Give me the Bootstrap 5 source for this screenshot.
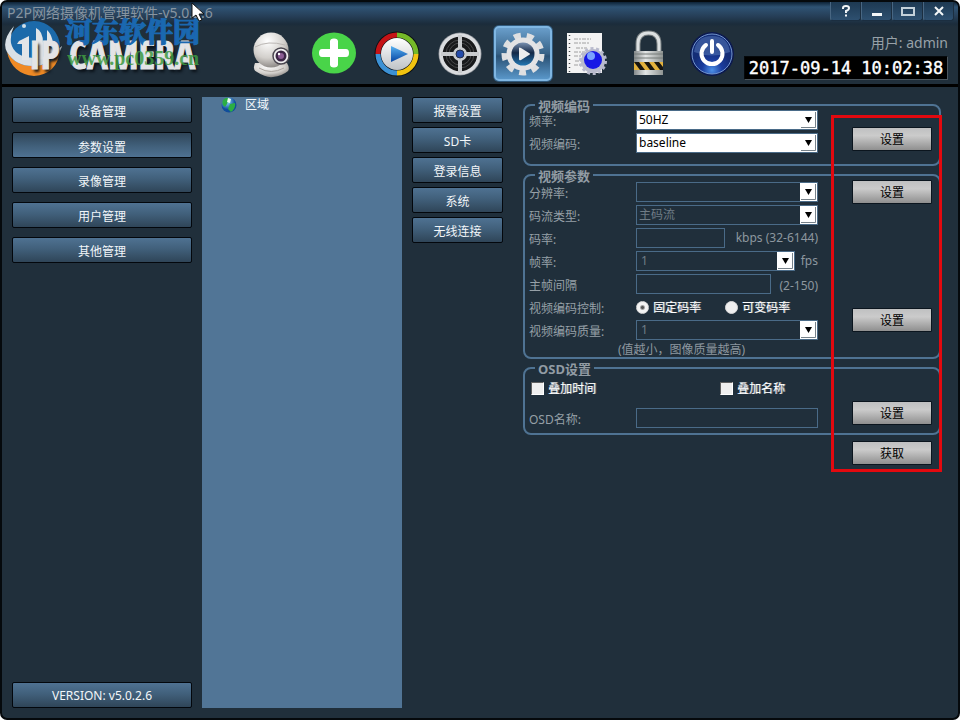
<!DOCTYPE html>
<html lang="zh-CN">
<head>
<meta charset="utf-8">
<meta name="viewport" content="width=device-width, initial-scale=1">
<title>P2P网络摄像机管理软件</title>
<link rel="stylesheet" href="https://cdn.jsdelivr.net/npm/bootstrap@5.3.0/dist/css/bootstrap.min.css">
<style>
  :root { --ink: #202f3b; --line: #4f7393; --steel: #517596; --dim: #8d979f; }
  body { background: #fff; font-family: "Noto Sans", "Noto Sans CJK SC", sans-serif; font-size: 12px; line-height: 16px; color: var(--dim); }
  .app { background: var(--ink); border: 2px solid #05090c; border-radius: 7px; overflow: hidden; }
  .app-head { border-bottom: 3px solid #000; background: linear-gradient(#0d2236 0, #2f5374 5px, #263f58 14px, #1b2c3b 22px, var(--ink) 25px); }
  .title-row { height: 22px; }
  .app-title { font-size: 14px; line-height: 22px; color: #8795a1; padding-left: 5px; }
  .win-btns { padding-right: 4px; }
  .win-btn { width: 31px; height: 19px; border: 1px solid #1b2e40; border-top: 0; border-left-color: #486682; border-radius: 0 0 3px 3px; background: linear-gradient(#1d3952, #2e5070); }
  .tool-row { height: 60px; }
  .brand-area { width: 237px; }
  .tool-btn { width: 63px; height: 60px; border: 0; background: none; }
  .brand-mark { position: absolute; left: 0; top: 16px; }
  .brand-name, .wm-cn, .wm-url { position: absolute; white-space: nowrap; }
  .brand-name { left: 27px; top: 32px; font: 700 39px/40px "Open Sans Condensed", "Liberation Sans Narrow", "Roboto Condensed", "Liberation Sans", sans-serif; color: #e3e4e6; -webkit-text-stroke: 1px #e3e4e6; text-shadow: 2px 3px 3px #0a1118; }
  .wm-cn { left: 63px; top: 12px; font: 900 27px/34px "Noto Serif CJK SC", "Noto Sans CJK SC", sans-serif; color: #1a68b0; -webkit-text-stroke: 1px #1a68b0; }
  .wm-url { left: 65px; top: 46px; font: 700 20px/20px "Liberation Serif", serif; color: #3f9a42; opacity: .85; }
  .pointer { position: absolute; left: 189px; top: 0; }
  .user-line { font-size: 14px; line-height: 18px; color: #98a1a8; }
  .user-side { padding: 6px 10px 0 0; }
  .clock { background: #000; color: #fff; font: 400 17px/22px "DejaVu Sans Mono", monospace; -webkit-text-stroke: 0.4px #fff; width: 204px; border: 1px solid #05090c; border-right-color: #4b555d; border-bottom-color: #4b555d; }
  .app-main { padding: 10px 17px 10px 10px; gap: 10px; }
  .nav-col { width: 180px; gap: 9px; }
  .sub-col { width: 91px; gap: 4px; }
  .steel-btn { height: 26px; line-height: 20px; padding: 3px 0 0; border: 1px solid #03070c; border-radius: 2px; color: #f2f6f9; text-align: center; background: linear-gradient(#4f7292, #41607b 45%, #2f4558); font-size: 12px; }
  .steel-btn.pressed { background: linear-gradient(#2f4558, #41607b 55%, #4f7292); padding-top: 5px; }
  .tree { width: 200px; background: var(--steel); color: #f4f8fb; padding-left: 19px; }
  .settings { padding: 3px 0 0 10px; gap: 4px; }
  .group { border: 2px solid var(--line); border-radius: 8px; padding: 0 7px 0 4px; min-width: 0; }
  .group legend { float: none; width: auto; height: 10px; margin: 0 0 0 6px; padding: 0 3px; font-size: 13px; line-height: 12px; font-weight: 700; color: #929ca4; }
  .fields { width: 289px; gap: 3px; }
  .line { height: 20px; }
  .line > .cap { width: 107px; flex: none; padding-top: 3px; color: #96a0a7; }
  .box { height: 20px; min-width: 0; border: 1px solid #4a6b88; border-radius: 0; background-color: var(--ink); color: #6f7c86; padding: 0 2px; font-size: 12px; line-height: 16px; }
  select.box { appearance: none; opacity: 1; padding-right: 18px; background-repeat: no-repeat; background-position: right 0 top 0; background-image: url("data:image/svg+xml,%3Csvg xmlns='http://www.w3.org/2000/svg' width='17' height='18'%3E%3Cpath fill='%23fff' d='M0 0h17v18H0z'/%3E%3Cpath d='M1 16.500h14.500V1' fill='none' stroke='%2377828a'/%3E%3Cpath d='M5 6h7l-3.500 6z'/%3E%3C/svg%3E"); }
  .box.lit { background-color: #fff; color: #000; }
  .short { width: 89px; } .mid { width: 159px; } .wide { width: 135px; }
  .tick { appearance: none; width: 13px; height: 13px; margin: 0; flex: none; background: #efefef; border: 1px solid #fff; border-top-color: #606060; border-left-color: #606060; }
  .tick[type=radio] { border-radius: 50%; border-color: #d9d9d9; }
  .tick[type=radio]:checked { background: radial-gradient(#555 0 1px, #f3f3f3 3px); }
  .hot { color: #fff; margin-left: 4px; padding-top: 2px; text-shadow: 1px 0 0 #8b959c; }
  .grey-btn { width: 80px; height: 24px; border: 1px solid #0b151e; border-radius: 1px; background: linear-gradient(#bfc0c1, #cbcbcb 35%, #8f8f8f); color: #000; font-size: 12px; line-height: 20px; padding: 2px 0 0; }
  .g-first { height: 54px; } .g-first .side { padding-bottom: 13px; }
  .g-video { height: 177px; } .g-video .fields { padding-top: 2px; } .g-video .side { padding: 0 0 25px; }
  .g-osd { height: 60px; } .g-osd .side { padding-bottom: 8px; } .g-osd .fields { padding-top: 5px; gap: 10px; }
  .checks { padding: 0 33px 0 2px; }
  .note { padding-left: 89px; line-height: 14px; }
  .fetch { margin: 2px 9px 0 0; }
  .marker { position: absolute; top: 18px; right: -1px; width: 111px; height: 357px; border: 3px solid #e3090f; pointer-events: none; }
</style>
</head>
<body>
<div class="app min-vh-100 d-flex flex-column">
  <header class="app-head position-relative">
    <div class="title-row d-flex justify-content-between">
      <div class="app-title">P2P网络摄像机管理软件-v5.0.2.6</div>
      <div class="win-btns d-flex">
        <button class="win-btn p-0 d-flex align-items-center justify-content-center" aria-label="帮助"><svg width="12" height="14" fill="none" stroke="#f4f7f9" stroke-width="2"><path d="M3 5V4q0-2 3-2t3 2q0 2-3 3v2M6 10.500v2"/></svg></button>
        <button class="win-btn p-0 d-flex align-items-center justify-content-center" aria-label="最小化"><svg width="12" height="14"><path fill="#f4f7f9" d="M1 9h10v3H1z"/></svg></button>
        <button class="win-btn p-0 d-flex align-items-center justify-content-center" aria-label="最大化"><svg width="16" height="14"><path fill="none" stroke="#c4d1da" stroke-width="2" d="M2 4h12v7H2z"/></svg></button>
        <button class="win-btn p-0 d-flex align-items-center justify-content-center" aria-label="关闭"><svg width="12" height="14"><path stroke="#f4f7f9" stroke-width="2" d="M2 3l8 8M10 3l-8 8"/></svg></button>
      </div>
    </div>
    <div class="tool-row d-flex align-items-center">
      <div class="brand-area flex-shrink-0"></div>
      <nav class="d-flex flex-shrink-0">
        <button class="tool-btn p-0" aria-label="摄像头"><svg width="60" height="60" viewBox="0 0 60 60"><defs><radialGradient id="cam" cx=".4" cy=".25" r=".8"><stop stop-color="#fff"/><stop offset=".6" stop-color="#d2cfcb"/><stop offset="1" stop-color="#85817e"/></radialGradient></defs><path d="M14 39q-3 7 2 9 9 6 16 5 9-1 15-6 2-3-1-8z" fill="url(#cam)"/><path d="M18 44q12 7 25 0" stroke="#aaa49e" fill="none"/><circle cx="30" cy="26" r="17.500" fill="url(#cam)"/><path d="M14 23q13-7 30-2" stroke="#bbb7b4" fill="none"/><circle cx="40" cy="32" r="8" fill="#efefef" stroke="#4b4750" stroke-width="1.500"/><circle cx="40" cy="32" r="5.500" fill="#3b2645"/><circle cx="40" cy="32" r="3" fill="#8b5b93"/><circle cx="38" cy="30" r="1.200" fill="#fff"/></svg></button>
        <button class="tool-btn p-0" aria-label="添加"><svg width="60" height="60" viewBox="0 0 60 60"><ellipse cx="30" cy="29" rx="22" ry="20.500" fill="#49d449"/><path d="M26 17.500q0-3 4-3t4 3V25h8q3 0 3 4t-3 4h-8v7.500q0 3-4 3t-4-3V33h-8q-3 0-3-4t3-4h8z" fill="#fff"/></svg></button>
        <button class="tool-btn p-0" aria-label="回放"><svg width="60" height="60" viewBox="0 0 60 60"><defs><linearGradient id="disc" x2="0" y2="1"><stop stop-color="#fff"/><stop offset="1" stop-color="#bfc3c7"/></linearGradient><linearGradient id="tri" x2="0" y2="1"><stop stop-color="#57b1f0"/><stop offset="1" stop-color="#0646a4"/></linearGradient></defs><circle cx="30" cy="30" r="22.500" fill="#0b0f14"/><g fill="none" stroke-width="5"><path d="M11 30A19 19 0 0 1 30 11" stroke="#c51316"/><path d="M30 11A19 19 0 0 1 49 30" stroke="#75b928"/><path d="M49 30A19 19 0 0 1 30 49" stroke="#f2c410"/><path d="M30 49A19 19 0 0 1 11 30" stroke="#3c91d4"/></g><circle cx="30" cy="30" r="16" fill="url(#disc)"/><path d="M24 22l17 8-17 8z" fill="url(#tri)"/></svg></button>
        <button class="tool-btn p-0" aria-label="录像"><svg width="60" height="60" viewBox="0 0 60 60"><circle cx="30" cy="30" r="21.500" fill="#8f9399"/><circle cx="30" cy="30" r="19" fill="#18191b" stroke="#dadcdf" stroke-width="3.500"/><g fill="none" stroke="#48494b"><circle cx="30" cy="30" r="14"/><circle cx="30" cy="30" r="11"/></g><path d="M30 11v38M11 30h38" stroke="#c9cbce" stroke-width="4"/><circle cx="30" cy="30" r="7" fill="#c9cbce"/><circle cx="30" cy="30" r="4" fill="#234aa9" stroke="#232d4a"/></svg></button>
        <button class="tool-btn p-0" aria-label="设置"><svg width="62" height="60" viewBox="0 0 62 60"><defs><linearGradient id="sel" x2="0" y2="1"><stop stop-color="#6ba0cd"/><stop offset=".5" stop-color="#376287"/><stop offset=".55" stop-color="#2b5275"/><stop offset="1" stop-color="#5b99cc"/></linearGradient><linearGradient id="orb" x2="0" y2="1"><stop stop-color="#7990b0"/><stop offset=".45" stop-color="#152947"/><stop offset="1" stop-color="#2478b3"/></linearGradient></defs><rect x="1" y="1" width="60" height="57" rx="6" fill="#315a7d"/><rect x="3" y="3" width="56" height="53" rx="4" fill="url(#sel)" stroke="#7fb6e2" stroke-width="2"/><circle cx="31" cy="30" r="18.500" fill="none" stroke="#dedfe1" stroke-width="6" stroke-dasharray="6.900 6.015"/><circle cx="31" cy="30" r="13.500" fill="none" stroke="#e3e3e5" stroke-width="6"/><circle cx="31" cy="30" r="11.500" fill="url(#orb)"/><path d="M27 24q0-1 2 0l8 5q2 1 0 2l-8 5q-2 1-2-1z" fill="#eee"/></svg></button>
        <button class="tool-btn p-0" aria-label="日志"><svg width="60" height="60" viewBox="0 0 60 60"><path d="M11 9h35v40H11z" fill="#f3f3f3"/><path d="M13.500 11v37" stroke="#44484c" stroke-width="1.500" stroke-dasharray="1 3"/><path d="M18 15h17M18 19h15M20 24h11M18 28h11M18 32h8M19 37h7M18 41h8" stroke="#a0a0a0" stroke-dasharray="4 1 2 1"/><circle cx="37" cy="37" r="12" fill="#b9bbcd"/><circle cx="37" cy="37" r="12.500" fill="none" stroke="#b9bbcd" stroke-width="3" stroke-dasharray="3 2.600"/><circle cx="37" cy="36" r="9" fill="#1717e5"/><circle cx="35" cy="32" r="4" fill="#79a1ff"/></svg></button>
        <button class="tool-btn p-0" aria-label="锁定"><svg width="60" height="60" viewBox="0 0 60 60"><defs><linearGradient id="lock" x2="1"><stop stop-color="#84898a"/><stop offset=".4" stop-color="#e2e5e5"/><stop offset="1" stop-color="#8f9492"/></linearGradient></defs><path d="M19 27V20Q19 9 29.500 9T40 20v7" fill="none" stroke="#777e80" stroke-width="5"/><path d="M19 27V20Q19 9 29.500 9T40 20v7" fill="none" stroke="#dce0e1" stroke-width="3"/><path d="M15 27h29v24H15z" fill="url(#lock)"/><path d="M15 30h29M15 34h29" stroke="#757a79"/><path d="M15 38h29v8H15z" fill="#e2b13c"/><path d="M15 38l6 8h5l-6-8zM25 38l6 8h5l-6-8zM35 38l6 8h3v-3l-4-5z" fill="#171510"/></svg></button>
        <button class="tool-btn p-0" aria-label="电源"><svg width="60" height="60" viewBox="0 0 60 60"><defs><radialGradient id="pow" cx=".5" cy=".9"><stop stop-color="#4d91e8"/><stop offset=".5" stop-color="#1b3d9e"/><stop offset="1" stop-color="#142d77"/></radialGradient></defs><circle cx="30" cy="30" r="22" fill="#0b1950"/><circle cx="30" cy="30" r="20" fill="url(#pow)" stroke="#7396cf"/><path d="M12 28Q14 12 30 12t18 16q-18 7-36 0z" fill="#6287c5" opacity=".45"/><path d="M24 21a10.500 10.500 0 1 0 12 0M30 17v11" fill="none" stroke="#fff" stroke-width="4" stroke-linecap="round"/></svg></button>
      </nav>
      <div class="user-side ms-auto d-flex flex-column align-items-end">
        <div class="user-line">用户: admin</div>
        <time class="clock text-center mt-1">2017-09-14 10:02:38</time>
      </div>
    </div>
    <svg class="brand-mark" width="64" height="58" viewBox="0 0 64 58"><circle cx="32" cy="29" r="26" fill="#1c6aaa"/><path d="M5 34q9 15 28 14 17-1 25-15-3 23-26 25Q10 56 5 34z" fill="#ef8a25"/><path d="M12 8Q-1 23 5 34q9 15 28 14 22-2 27-20Q48 40 32 40 12 39 9 25 8 16 12 8z" fill="#d9e0e6"/><path d="M17 23l10-5v24h-7V26h-5zM34 10q7 3 7 15v16h-7zM45 12q7 6 7 25l-7 3z" fill="#e2e5e8"/><circle cx="22" cy="8" r="2" fill="#cfdde8"/></svg>
    <div class="brand-name">IP CAMERA</div>
    <div class="wm-cn">河东软件园</div>
    <div class="wm-url">www.pc0359.cn</div>
    <svg class="pointer" width="14" height="20"><path d="M1 1v15l4-3 3 6 3-1-3-6h5z" fill="#fff" stroke="#111"/></svg>
  </header>

  <main class="app-main d-flex flex-grow-1">
    <nav class="nav-col d-flex flex-column flex-shrink-0">
      <button class="steel-btn">设备管理</button>
      <button class="steel-btn pressed">参数设置</button>
      <button class="steel-btn">录像管理</button>
      <button class="steel-btn">用户管理</button>
      <button class="steel-btn">其他管理</button>
      <div class="steel-btn mt-auto">VERSION: v5.0.2.6</div>
    </nav>
    <section class="tree flex-shrink-0">
      <div class="d-flex align-items-start">
        <svg width="16" height="16" viewBox="0 0 16 16"><defs><radialGradient id="globe" cx=".4" cy=".3"><stop stop-color="#8fd8ff"/><stop offset="1" stop-color="#104d9b"/></radialGradient></defs><circle cx="8" cy="8" r="7.500" fill="url(#globe)"/><path d="M2 3q4-4 6-1L6 7 4 10Q0 8 2 3zM9 7l5-1q1 5-4 9l-3-3z" fill="#2cae43"/><path d="M7 1l3 1-1 4-3-1z" fill="#edfff0"/></svg>
        <span class="ms-1 ps-1">区域</span>
      </div>
    </section>
    <nav class="sub-col d-flex flex-column flex-shrink-0">
      <button class="steel-btn">报警设置</button>
      <button class="steel-btn">SD卡</button>
      <button class="steel-btn">登录信息</button>
      <button class="steel-btn">系统</button>
      <button class="steel-btn">无线连接</button>
    </nav>
    <form class="settings position-relative d-flex flex-column flex-grow-1">
      <fieldset class="group">
        <legend>视频编码</legend>
        <div class="g-first d-flex justify-content-between">
          <div class="fields d-flex flex-column">
            <div class="line d-flex align-items-center"><label class="cap" for="freq">频率:</label><select id="freq" class="box lit flex-grow-1"><option>50HZ</option></select></div>
            <div class="line d-flex align-items-center"><label class="cap" for="codec">视频编码:</label><select id="codec" class="box lit flex-grow-1"><option>baseline</option></select></div>
          </div>
          <div class="side d-flex flex-column justify-content-end"><button type="button" class="grey-btn">设置</button></div>
        </div>
      </fieldset>
      <fieldset class="group">
        <legend>视频参数</legend>
        <div class="g-video d-flex justify-content-between">
          <div class="fields d-flex flex-column">
            <div class="line d-flex align-items-center"><label class="cap" for="res">分辨率:</label><select id="res" class="box flex-grow-1"><option></option></select></div>
            <div class="line d-flex align-items-center"><label class="cap" for="stream">码流类型:</label><select id="stream" class="box flex-grow-1"><option>主码流</option></select></div>
            <div class="line d-flex align-items-center"><label class="cap" for="rate">码率:</label><input id="rate" class="box short"><span class="ms-auto text-nowrap">kbps (32-6144)</span></div>
            <div class="line d-flex align-items-center"><label class="cap" for="fps">帧率:</label><select id="fps" class="box mid ps-1"><option>1</option></select><span class="ms-auto">fps</span></div>
            <div class="line d-flex align-items-center"><label class="cap" for="gop">主帧间隔</label><input id="gop" class="box wide"><span class="ms-auto pt-1 text-nowrap">(2-150)</span></div>
            <div class="line d-flex align-items-center"><span class="cap">视频编码控制:</span><input class="tick" type="radio" name="mode" id="cbr" checked><label class="hot" for="cbr">固定码率</label><input class="tick ms-4" type="radio" name="mode" id="vbr"><label class="hot" for="vbr">可变码率</label></div>
            <div class="line d-flex align-items-center"><label class="cap" for="quality">视频编码质量:</label><select id="quality" class="box flex-grow-1 ps-1"><option>1</option></select></div>
            <div class="note">(值越小，图像质量越高)</div>
          </div>
          <div class="side d-flex flex-column justify-content-between"><button type="button" class="grey-btn">设置</button><button type="button" class="grey-btn">设置</button></div>
        </div>
      </fieldset>
      <fieldset class="group">
        <legend>OSD设置</legend>
        <div class="g-osd d-flex justify-content-between">
          <div class="fields d-flex flex-column">
            <div class="line checks d-flex align-items-center justify-content-between">
              <div class="d-flex align-items-center"><input class="tick" type="checkbox" id="t1"><label class="hot" for="t1">叠加时间</label></div>
              <div class="d-flex align-items-center"><input class="tick" type="checkbox" id="t2"><label class="hot" for="t2">叠加名称</label></div>
            </div>
            <div class="line d-flex align-items-center"><label class="cap" for="osd">OSD名称:</label><input id="osd" class="box flex-grow-1"></div>
          </div>
          <div class="side d-flex flex-column justify-content-end"><button type="button" class="grey-btn">设置</button></div>
        </div>
      </fieldset>
      <button type="button" class="grey-btn fetch align-self-end">获取</button>
      <div class="marker"></div>
    </form>
  </main>
</div>
<script src="https://cdn.jsdelivr.net/npm/bootstrap@5.3.0/dist/js/bootstrap.bundle.min.js"></script>
</body>
</html>
